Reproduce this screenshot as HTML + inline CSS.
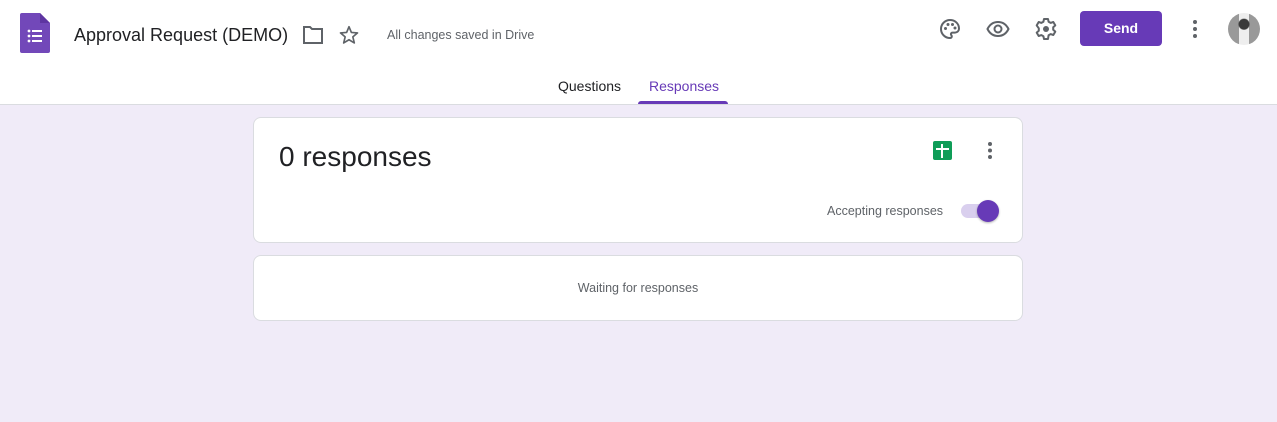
<!DOCTYPE html>
<html><head><style>
*{margin:0;padding:0;box-sizing:border-box}
body{width:1277px;height:422px;background:#f0ebf8;font-family:"Liberation Sans",sans-serif;position:relative;overflow:hidden}
.hdr{position:absolute;left:0;top:0;width:1277px;height:105px;background:#fff;border-bottom:1px solid #dadce0}
.abs{position:absolute}
.card{position:absolute;background:#fff;border:1px solid #dadce0;border-radius:8px}
</style></head><body>
<div class="hdr">
 <svg class="abs" style="left:20px;top:13px" width="30" height="40" viewBox="0 0 30 40">
  <path d="M2 0H20L30 10V38A2 2 0 0 1 28 40H2A2 2 0 0 1 0 38V2A2 2 0 0 1 2 0Z" fill="#7248b9"/>
  <path d="M20 0L30 10H20Z" fill="#5e35a1"/>
  <g fill="#fff"><circle cx="9" cy="18" r="1.4"/><circle cx="9" cy="23" r="1.4"/><circle cx="9" cy="28" r="1.4"/>
  <rect x="12" y="17" width="10" height="2"/><rect x="12" y="22" width="10" height="2"/><rect x="12" y="27" width="10" height="2"/></g>
 </svg>
 <div class="abs" style="left:74px;top:25px;font-size:18px;color:#202124">Approval Request (DEMO)</div>
 <svg class="abs" style="left:302px;top:25px" width="22" height="20" viewBox="0 0 22 20"><path d="M2 2H8L10 4H20V18H2Z" fill="none" stroke="#5f6368" stroke-width="2"/></svg>
 <svg class="abs" style="left:338px;top:24px" width="22" height="22" viewBox="0 0 24 24"><path d="M12 3L14.6 9.2 21.3 9.7 16.2 14.1 17.8 20.7 12 17.2 6.2 20.7 7.8 14.1 2.7 9.7 9.4 9.2Z" fill="none" stroke="#5f6368" stroke-width="1.8" stroke-linejoin="round"/></svg>
 <div class="abs" style="left:387px;top:28px;font-size:12.5px;color:#5f6368">All changes saved in Drive</div>
 <svg class="abs" style="left:938px;top:17px" width="24" height="24" viewBox="0 0 24 24"><path d="M12 3a9 9 0 0 0 0 18c1.2 0 1.8-.8 1.8-1.6 0-1-.9-1.4-.9-2.3 0-.9.8-1.5 1.7-1.5H17a4 4 0 0 0 4-4C21 6.6 17 3 12 3Z" fill="none" stroke="#5f6368" stroke-width="2"/><g fill="#5f6368"><circle cx="7.5" cy="11.5" r="1.5"/><circle cx="10" cy="7.5" r="1.5"/><circle cx="14.5" cy="7.5" r="1.5"/><circle cx="17" cy="11" r="1.5"/></g></svg>
 <svg class="abs" style="left:986px;top:17px" width="24" height="24" viewBox="0 0 24 24"><path d="M1.5 12C4 7 8 5 12 5s8 2 10.5 7C20 17 16 19 12 19S4 17 1.5 12Z" fill="none" stroke="#5f6368" stroke-width="2"/><circle cx="12" cy="12" r="3.5" fill="none" stroke="#5f6368" stroke-width="2"/></svg>
 <svg class="abs" style="left:1034px;top:17px" width="24" height="24" viewBox="0 0 24 24"><path d="M10 2h4l.6 2.8 2 1.1 2.7-.9 2 3.4-2.1 1.9v2.4l2.1 1.9-2 3.4-2.7-.9-2 1.1L14 22h-4l-.6-2.8-2-1.1-2.7.9-2-3.4 2.1-1.9v-2.4L2.7 8.4l2-3.4 2.7.9 2-1.1Z" fill="none" stroke="#5f6368" stroke-width="2" stroke-linejoin="round"/><circle cx="12" cy="12" r="3" fill="#5f6368"/></svg>
 <div class="abs" style="left:1080px;top:11px;width:82px;height:35px;background:#673ab7;border-radius:4px;color:#fff;font-weight:bold;font-size:14px;text-align:center;line-height:35px">Send</div>
 <svg class="abs" style="left:1190px;top:18px" width="10" height="22"><g fill="#5f6368"><circle cx="5" cy="4" r="2"/><circle cx="5" cy="11" r="2"/><circle cx="5" cy="18" r="2"/></g></svg>
 <div class="abs" style="left:1228px;top:13px;width:32px;height:32px;border-radius:50%;background:radial-gradient(circle at 50% 35%,#3a3a3a 0 5px,transparent 6px),linear-gradient(90deg,#999 0 35%,#eee 35% 65%,#999 65%)"></div>
 <div class="abs" style="left:558px;top:78px;font-size:14px;color:#202124">Questions</div>
 <div class="abs" style="left:649px;top:78px;font-size:14px;color:#673ab7">Responses</div>
 <div class="abs" style="left:638px;top:101px;width:90px;height:3px;background:#673ab7;border-radius:3px 3px 0 0"></div>
</div>
<div class="card" style="left:253px;top:117px;width:770px;height:126px">
 <div class="abs" style="left:25px;top:23px;font-size:28px;color:#202124">0 responses</div>
 <div class="abs" style="left:679px;top:23px;width:19px;height:19px;background:#0f9d58;border-radius:2px"></div>
 <div class="abs" style="left:687px;top:26px;width:2px;height:14px;background:#fff"></div>
 <div class="abs" style="left:682px;top:30px;width:13px;height:2px;background:#fff"></div>
 <svg class="abs" style="left:732px;top:23px" width="8" height="20"><g fill="#5f6368"><circle cx="4" cy="3" r="2"/><circle cx="4" cy="9.5" r="2"/><circle cx="4" cy="16" r="2"/></g></svg>
 <div class="abs" style="left:573px;top:86px;font-size:12.5px;color:#5f6368">Accepting responses</div>
 <div class="abs" style="left:707px;top:86px;width:34px;height:14px;border-radius:7px;background:#d9cfee"></div>
 <div class="abs" style="left:723px;top:82px;width:22px;height:22px;border-radius:50%;background:#673ab7;box-shadow:0 1px 2px rgba(0,0,0,.3)"></div>
</div>
<div class="card" style="left:253px;top:255px;width:770px;height:66px">
 <div style="text-align:center;margin-top:25px;font-size:12.5px;color:#5f6368">Waiting for responses</div>
</div>
</body></html>
